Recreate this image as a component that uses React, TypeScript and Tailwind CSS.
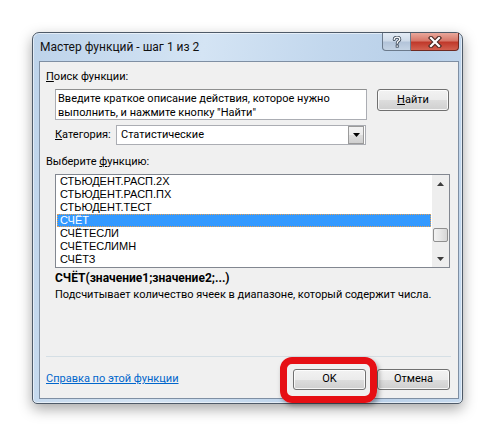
import React from "react";

const btn =
  "flex items-center justify-center rounded-[3px] border border-[#707070] bg-[linear-gradient(#f2f2f2_0%,#ebebeb_50%,#dddddd_51%,#cfcfcf_100%)] shadow-[inset_0_0_0_1px_rgba(255,255,255,0.8)] text-[11px] text-black";

function HelpGlyph() {
  return (
    <svg width="10" height="12" viewBox="0 0 10 12">
      <path
        d="M2.2 3.6 C2.2 1.8 3.6 1.2 5 1.2 C6.6 1.2 7.8 2 7.8 3.4 C7.8 5 5.2 5.2 5.2 7.2"
        fill="none"
        stroke="#3d4a5a"
        strokeWidth="3"
        strokeLinecap="round"
      />
      <path
        d="M2.2 3.6 C2.2 1.8 3.6 1.2 5 1.2 C6.6 1.2 7.8 2 7.8 3.4 C7.8 5 5.2 5.2 5.2 7.2"
        fill="none"
        stroke="#ffffff"
        strokeWidth="1.3"
        strokeLinecap="round"
      />
      <rect x="3.7" y="8.6" width="3" height="3" fill="#3d4a5a" />
      <rect x="4.5" y="9.4" width="1.4" height="1.4" fill="#ffffff" />
    </svg>
  );
}

function CloseGlyph() {
  return (
    <svg width="14" height="12" viewBox="0 0 14 12">
      <path d="M3 2 L11 10 M11 2 L3 10" stroke="#4a2a25" strokeWidth="4.4" strokeLinecap="square" />
      <path d="M3 2 L11 10 M11 2 L3 10" stroke="#ffffff" strokeWidth="2.2" strokeLinecap="square" />
    </svg>
  );
}

const items = [
  "СТЬЮДЕНТ.РАСП.2Х",
  "СТЬЮДЕНТ.РАСП.ПХ",
  "СТЬЮДЕНТ.ТЕСТ",
  "СЧЁТ",
  "СЧЁТЕСЛИ",
  "СЧЁТЕСЛИМН",
  "СЧЁТЗ",
];

export default function App() {
  return (
    <div className="w-[497px] h-[439px] bg-white pl-[32px] pt-[32px] font-['Roboto','Liberation_Sans',sans-serif] text-black">
      <div className="w-[431px] h-[372px] rounded-t-[7px] rounded-b-[5px] border border-[#4e5a68] bg-[linear-gradient(100deg,#bdd3ea_0%,#d4e4f4_35%,#c2d7ed_60%,#b8cfe8_80%,#c6daef_100%)] shadow-[0_5px_14px_rgba(0,0,0,0.35),inset_0_0_0_1px_rgba(255,255,255,0.55)] pl-[6px] pr-[3px] pb-[3px] flex flex-col">
        {/* Title bar */}
        <div className="h-[28px] flex items-start">
          <div className="h-[28px] flex items-center pl-[1px] text-[12px] text-[#111]">
            Мастер функций - шаг 1 из 2
          </div>
          <div className="ml-auto flex">
            <div className="w-[29px] h-[18px] flex items-center justify-center rounded-bl-[4px] border border-t-0 border-[#6b7a8c] bg-[linear-gradient(#e3ebf5_0%,#cfdbe9_45%,#b3c4d9_55%,#c4d3e4_100%)]">
              <HelpGlyph />
            </div>
            <div className="w-[48px] h-[18px] flex items-center justify-center rounded-br-[4px] border border-t-0 border-l-0 border-[#6e2a22] bg-[linear-gradient(#e9a89b_0%,#d7786a_45%,#c0392b_55%,#d2604f_100%)]">
              <CloseGlyph />
            </div>
          </div>
        </div>

        {/* Client area */}
        <div className="w-[420px] h-[338px] bg-[#f0f0f0] border border-[#7f8fa3] flex flex-col pl-[6px] text-[11px]">
          <div className="h-[16px] mt-[7px] leading-[16px]">
            <span className="underline">П</span>оиск функции:
          </div>

          <div className="flex mt-[4px] ml-[9px]">
            <div className="w-[312px] h-[31px] bg-white border border-[#abadb3] border-t-[#8e8f8f] pl-[2px] pt-[2px] leading-[14px]">
              <div>Введите краткое описание действия, которое нужно</div>
              <div>выполнить, и нажмите кнопку "Найти"</div>
            </div>
            <div className={`${btn} w-[72px] h-[22px] ml-[10px]`}>
              <span>
                <span className="underline">Н</span>айти
              </span>
            </div>
          </div>

          <div className="flex items-center mt-[5px] ml-[9px] h-[20px]">
            <div className="w-[61px]">
              <span className="underline">К</span>атегория:
            </div>
            <div className="w-[250px] h-[20px] bg-white border border-[#abadb3] flex items-center">
              <div className="flex-1 pl-[4px]">Статистические</div>
              <div className="w-[16px] h-[18px] mr-[1px] border border-[#9a9a9a] bg-[linear-gradient(#f2f2f2_0%,#ebebeb_50%,#dddddd_51%,#cfcfcf_100%)] flex items-center justify-center">
                <svg width="7" height="4" viewBox="0 0 7 4">
                  <path d="M0 0 H7 L3.5 4 Z" fill="#000" />
                </svg>
              </div>
            </div>
          </div>

          <div className="h-[16px] mt-[9px] leading-[16px]">
            Выберите <span className="underline">ф</span>ункцию:
          </div>

          <div className="mt-[4px] ml-[9px] w-[395px] h-[94px] bg-white border border-[#828790] flex">
            <div className="flex-1 p-[1px] pt-0 font-['Liberation_Sans',sans-serif] text-[11px]">
              {items.map((it) => (
                <div
                  key={it}
                  className={
                    it === "СЧЁТ"
                      ? "h-[13px] leading-[11px] bg-[#3399ff] text-white pl-[2px] border border-dotted border-[#e8a050]"
                      : "h-[13px] leading-[13px] pl-[3px]"
                  }
                >
                  {it}
                </div>
              ))}
            </div>
            <div className="w-[17px] bg-[#eeeeee] flex flex-col">
              <div className="h-[17px] flex items-center justify-center">
                <svg width="7" height="4" viewBox="0 0 7 4">
                  <path d="M0 4 H7 L3.5 0 Z" fill="#3c3c3c" />
                </svg>
              </div>
              <div className="flex-1">
                <div className="mt-[36px] mx-[1px] h-[14px] rounded-[2px] border border-[#8f8f8f] bg-[linear-gradient(90deg,#f2f2f2_0%,#e6e6e6_50%,#d6d6d6_100%)]" />
              </div>
              <div className="h-[17px] flex items-center justify-center">
                <svg width="7" height="4" viewBox="0 0 7 4">
                  <path d="M0 0 H7 L3.5 4 Z" fill="#3c3c3c" />
                </svg>
              </div>
            </div>
          </div>

          <div className="ml-[9px] mt-[2px] h-[16px] leading-[16px] font-bold text-[12px]">
            СЧЁТ(значение1;значение2;...)
          </div>
          <div className="ml-[9px] mt-[1px] h-[16px] leading-[16px] whitespace-nowrap">
            Подсчитывает количество ячеек в диапазоне, который содержит числа.
          </div>

          <div className="mt-[53px] w-[405px] h-[1px] bg-[#d5dfe5]" />

          <div className="mt-[12px] flex items-center h-[21px]">
            <span className="text-[#0066cc] underline">Справка по этой функции</span>
            <div className="ml-auto mr-[8px] flex">
              <div className="relative">
                <div className={`${btn} w-[73px] h-[21px] border-[#3c7fb1] shadow-[inset_0_0_0_1px_#a8e1fb]`}>
                  OK
                </div>
                <div className="absolute left-[-13px] top-[-12px] w-[97px] h-[46px] rounded-[12px] border-[7px] border-[#e60f14] shadow-[2px_3px_5px_rgba(0,0,0,0.35)]" />
              </div>
              <div className={`${btn} w-[73px] h-[21px] ml-[11px]`}>Отмена</div>
            </div>
          </div>
        </div>
      </div>
    </div>
  );
}
